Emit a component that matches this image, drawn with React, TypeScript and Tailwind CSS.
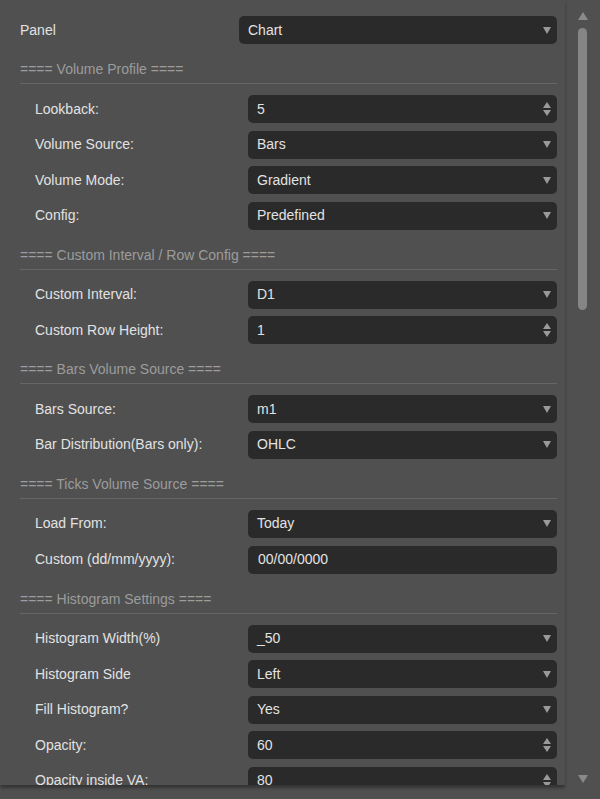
const Caret = () => (
  <svg width="8" height="7" viewBox="0 0 8 7" className="fill-[#9a9a9a]"><path d="M0 0h8L4 7z" /></svg>
);
const Spin = () => (
  <div className="flex flex-col gap-[2px]">
    <svg width="8" height="6" viewBox="0 0 8 6" className="fill-[#9a9a9a]"><path d="M4 0l4 6H0z" /></svg>
    <svg width="8" height="6" viewBox="0 0 8 6" className="fill-[#9a9a9a]"><path d="M0 0h8L4 6z" /></svg>
  </div>
);

type Row = [string, string, 'select' | 'spin' | 'text'];

function Field({ value, kind, wide }: { value: string; kind: string; wide?: boolean }) {
  return (
    <div className={`${wide ? 'w-[318px]' : 'w-[309px]'} h-[28px] rounded-[5px] bg-[#2a2a2a] flex items-center justify-between pl-[9px] pr-[6px]`}>
      <span className={kind === 'text' ? 'pl-[1px]' : ''}>{value}</span>
      {kind === 'select' && <Caret />}
      {kind === 'spin' && <Spin />}
    </div>
  );
}

const sections: { title: string; rows: Row[] }[] = [
  { title: '==== Volume Profile ====', rows: [['Lookback:', '5', 'spin'], ['Volume Source:', 'Bars', 'select'], ['Volume Mode:', 'Gradient', 'select'], ['Config:', 'Predefined', 'select']] },
  { title: '==== Custom Interval / Row Config ====', rows: [['Custom Interval:', 'D1', 'select'], ['Custom Row Height:', '1', 'spin']] },
  { title: '==== Bars Volume Source ====', rows: [['Bars Source:', 'm1', 'select'], ['Bar Distribution(Bars only):', 'OHLC', 'select']] },
  { title: '==== Ticks Volume Source ====', rows: [['Load From:', 'Today', 'select'], ['Custom (dd/mm/yyyy):', '00/00/0000', 'text']] },
  { title: '==== Histogram Settings ====', rows: [['Histogram Width(%)', '_50', 'select'], ['Histogram Side', 'Left', 'select'], ['Fill Histogram?', 'Yes', 'select'], ['Opacity:', '60', 'spin'], ['Opacity inside VA:', '80', 'spin']] },
];

export default function App() {
  return (
    <div className="w-[600px] h-[799px] bg-[#505050] text-[#e2e2e2] text-[14px] flex" style={{ fontFamily: '"Liberation Sans", Arial, sans-serif' }}>
      <div className="relative w-[565px] h-[785px] overflow-hidden pl-[20px] pr-[8px] pt-[16px] shadow-[0_3px_3px_rgba(0,0,0,0.35)]">
        <div className="flex items-center justify-between">
          <span>Panel</span>
          <Field value="Chart" kind="select" wide />
        </div>
        {sections.map((s) => (
          <div key={s.title} className="pt-[17px]">
            <div className="h-4 leading-4 text-[#9c9c9c]">{s.title}</div>
            <div className="mt-[6px] h-px bg-[#666]" />
            <div className="mt-[11px] flex flex-col gap-[7.6px] pl-[15px]">
              {s.rows.map(([l, v, k]) => (
                <div key={l} className="flex items-center justify-between">
                  <span>{l}</span>
                  <Field value={v} kind={k} />
                </div>
              ))}
            </div>
          </div>
        ))}
      </div>
      <div className="flex-1 flex flex-col items-center pt-[12px] pb-[16px]">
        <svg width="10" height="8" viewBox="0 0 10 8" className="fill-[#8a8a8a]"><path d="M5 0l5 8H0z" /></svg>
        <div className="mt-[8px] w-[9px] h-[282px] rounded-full bg-[#858585]" />
        <div className="flex-1" />
        <svg width="10" height="8" viewBox="0 0 10 8" className="fill-[#8a8a8a]"><path d="M0 0h10L5 8z" /></svg>
      </div>
    </div>
  );
}
